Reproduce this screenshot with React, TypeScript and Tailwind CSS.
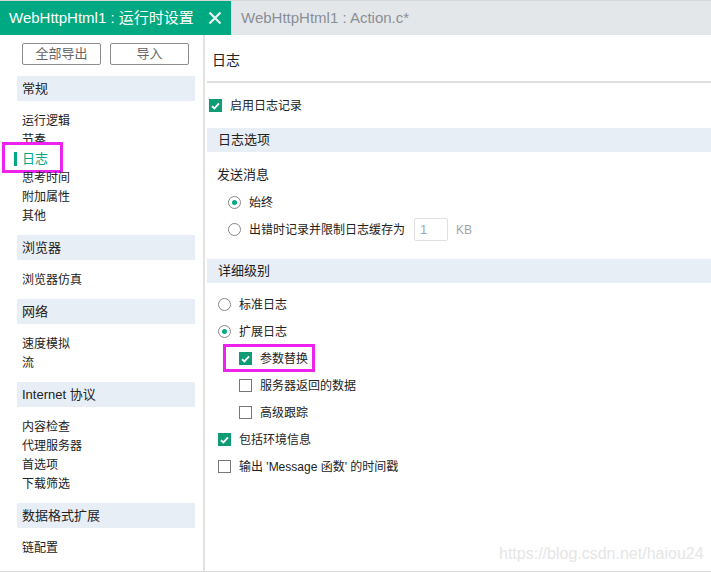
import React from "react";

const FONT = { fontFamily: '"Liberation Sans", "Noto Sans CJK SC", sans-serif' };

function CheckBox({ checked }: { checked: boolean }) {
  if (checked)
    return (
      <span className="w-[13px] h-[13px] bg-[#0f9b74] flex items-center justify-center shrink-0">
        <svg width="9" height="8" viewBox="0 0 9 8">
          <path d="M1 4.2 L3.4 6.4 L8 1.4" stroke="#fff" strokeWidth="1.9" fill="none" />
        </svg>
      </span>
    );
  return <span className="w-[13px] h-[13px] border border-[#777] bg-white shrink-0" />;
}

function Radio({ checked }: { checked: boolean }) {
  return (
    <span className="w-[13px] h-[13px] rounded-full border border-[#888] bg-white flex items-center justify-center shrink-0">
      {checked && <span className="w-[5px] h-[5px] rounded-full bg-[#01a982]" />}
    </span>
  );
}

function SideHeader({ children }: { children: React.ReactNode }) {
  return (
    <div className="ml-[17px] w-[178px] h-[25px] bg-[#e8eef6] flex items-center pl-[5px] text-[13px] text-[#222]">
      {children}
    </div>
  );
}

function SideItems({ items, active }: { items: string[]; active?: string }) {
  return (
    <div className="pt-[10px] pb-[10px]">
      {items.map((it) => (
        <div key={it} className="h-[19px] flex items-center text-[12px] relative pl-[22px] pt-[1px]">
          {it === active ? (
            <>
              <span className="absolute left-[14px] top-[3px] w-[3px] h-[14px] bg-[#01a982]" />
              <span className="text-[#01a982] text-[13px]">{it}</span>
              <span className="absolute left-[2px] top-[-7px] w-[61px] h-[31px] border-[3px] border-[#ee22ee]" />
            </>
          ) : (
            <span className="text-[#222]">{it}</span>
          )}
        </div>
      ))}
    </div>
  );
}

function Row({ children, indent }: { children: React.ReactNode; indent: string }) {
  return <div className={`h-[27px] flex items-center gap-[8px] text-[12px] text-[#222] ${indent}`}>{children}</div>;
}

function RightHeader({ children }: { children: React.ReactNode }) {
  return (
    <div className="h-[24px] bg-[#e8eef6] flex items-center pl-[11px] text-[13px] text-[#222]">{children}</div>
  );
}

export default function App() {
  return (
    <div className="w-[711px] h-[572px] bg-white relative overflow-hidden flex flex-col" style={FONT}>
      {/* Tabs */}
      <div className="h-[35px] flex border-t border-[#d6d6d6] shrink-0">
        <div className="w-[231px] bg-[#01a982] flex items-center pl-[9px] pr-[9px] text-white text-[15px]">
          <span className="flex-1">WebHttpHtml1 : 运行时设置</span>
          <svg width="14" height="14" viewBox="0 0 14 14">
            <path d="M1.5 1.5 L12.5 12.5 M12.5 1.5 L1.5 12.5" stroke="#e6f6f1" strokeWidth="2.2" />
          </svg>
        </div>
        <div className="flex-1 bg-[#e4e7ea] flex items-center pl-[10px] text-[15px] text-[#8a8f96]">
          WebHttpHtml1 : Action.c*
        </div>
      </div>

      <div className="flex flex-1 border-b border-[#dcdcdc]">
        {/* Left */}
        <div className="w-[205px] border-r-2 border-[#e2e2e2] shrink-0">
          <div className="flex gap-[9px] pl-[22px] pt-[8px] pb-[11px]">
            <button className="w-[79px] h-[22px] border border-[#8c8c8c] rounded-[2px] text-[13px] text-[#666] flex items-center justify-center">
              全部导出
            </button>
            <button className="w-[79px] h-[22px] border border-[#8c8c8c] rounded-[2px] text-[13px] text-[#666] flex items-center justify-center">
              导入
            </button>
          </div>
          <SideHeader>常规</SideHeader>
          <SideItems items={["运行逻辑", "节奏", "日志", "思考时间", "附加属性", "其他"]} active="日志" />
          <SideHeader>浏览器</SideHeader>
          <SideItems items={["浏览器仿真"]} />
          <SideHeader>网络</SideHeader>
          <SideItems items={["速度模拟", "流"]} />
          <SideHeader>Internet 协议</SideHeader>
          <SideItems items={["内容检查", "代理服务器", "首选项", "下载筛选"]} />
          <SideHeader>数据格式扩展</SideHeader>
          <SideItems items={["链配置"]} />
        </div>

        {/* Right */}
        <div className="flex-1 pl-[2px]">
          <div className="h-[48px] flex items-center pl-[5px] pt-[4px] text-[14px] text-[#222] border-b-2 border-[#e0e0e0]">日志</div>
          <div className="h-[45px] flex items-center gap-[8px] pl-[2px] text-[12px] text-[#222]">
            <CheckBox checked />
            <span>启用日志记录</span>
          </div>
          <RightHeader>日志选项</RightHeader>
          <div className="pt-[9px] pb-[16px]">
            <div className="h-[28px] flex items-center pl-[10px] text-[13px] text-[#222]">发送消息</div>
            <Row indent="pl-[21px]">
              <Radio checked />
              <span>始终</span>
            </Row>
            <Row indent="pl-[21px]">
              <Radio checked={false} />
              <span>出错时记录并限制日志缓存为</span>
              <span className="ml-[1px] w-[34px] h-[23px] border border-[#e0e0e0] rounded-[2px] flex items-center pl-[5px] text-[13px] text-[#9aa8c0]">
                1
              </span>
              <span className="text-[#a0a4aa] text-[12px]">KB</span>
            </Row>
          </div>
          <RightHeader>详细级别</RightHeader>
          <div className="pt-[8px]">
            <Row indent="pl-[11px]">
              <Radio checked={false} />
              <span>标准日志</span>
            </Row>
            <Row indent="pl-[11px]">
              <Radio checked />
              <span>扩展日志</span>
            </Row>
            <Row indent="pl-[32px] relative">
              <CheckBox checked />
              <span>参数替换</span>
              <span className="absolute left-[16px] top-[-1px] w-[92px] h-[28px] border-[3px] border-[#ee22ee]" />
            </Row>
            <Row indent="pl-[32px]">
              <CheckBox checked={false} />
              <span>服务器返回的数据</span>
            </Row>
            <Row indent="pl-[32px]">
              <CheckBox checked={false} />
              <span>高级跟踪</span>
            </Row>
            <Row indent="pl-[11px]">
              <CheckBox checked />
              <span>包括环境信息</span>
            </Row>
            <Row indent="pl-[11px]">
              <CheckBox checked={false} />
              <span>输出 'Message 函数' 的时间戳</span>
            </Row>
          </div>
        </div>
      </div>

      <div className="absolute left-[499px] top-[542px] text-[16px] text-[#e6e6e6]">https://blog.csdn.net/haiou24</div>
    </div>
  );
}
